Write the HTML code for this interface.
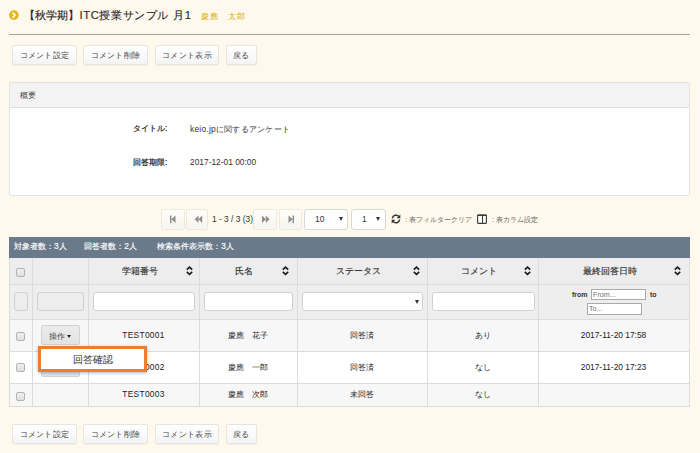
<!DOCTYPE html>
<html><head><meta charset="utf-8">
<style>
*{box-sizing:border-box;margin:0;padding:0}
html,body{width:700px;height:453px;overflow:hidden;background:#fef9ec;font-family:"Liberation Sans",sans-serif;color:#333}
.a{position:absolute;white-space:nowrap}
.title{left:24px;top:7px;font-size:11.2px;line-height:16px;color:#2a2a2a;-webkit-text-stroke:0.15px #2a2a2a}
.name{left:201px;top:9.5px;font-size:8.4px;line-height:12px;letter-spacing:0.9px;color:#e0b010;-webkit-text-stroke:0.05px #e0b010}
.hr{left:9px;top:34px;width:681px;height:1px;background:#a3a3a3}
.btn{position:absolute;height:20px;border:1px solid #e8e5de;border-radius:2px;background:linear-gradient(#fff,#f4f4f4);font-size:8.4px;letter-spacing:0.3px;line-height:18px;text-align:center;color:#444;white-space:nowrap;box-shadow:0 1px 1px rgba(0,0,0,.04)}
.panel{left:9px;top:82px;width:681px;height:114px;border:1px solid #e3e3e3;border-radius:2px;background:#fff;overflow:hidden}
.phead{height:25px;background:#f3f3f4;border-bottom:1px solid #dedede;font-size:8.4px;line-height:24px;padding-left:10px;color:#444}
.lbl{font-size:8.4px;font-weight:normal;color:#222;line-height:10px;-webkit-text-stroke:0.2px #222}
.val{font-size:8.4px;color:#333;line-height:12px}
.kt{letter-spacing:0.25px}
.pbtn{position:absolute;top:209px;height:20.5px;border:1px solid #eee9de;border-radius:2px;background:linear-gradient(#fefdf9,#f7f5ef)}
.pbtn svg{position:absolute;left:0;top:0}
.sel{position:absolute;top:209px;height:20.5px;border:1px solid #d8d8d8;border-radius:3px;background:#fff;font-size:8.4px;line-height:18px;color:#333}
.bar{left:9px;top:237px;width:681px;height:21px;background:#6b7a8b;color:#fff;font-size:8.4px;line-height:19px;-webkit-text-stroke:0.15px #fff}
.row{position:absolute;left:9px;width:681px}
.vl{position:absolute;top:258px;width:1px;height:149px;background:#dcdcdc}
.hl{position:absolute;left:9px;width:681px;height:1px;background:#dcdcdc}
.cb{position:absolute;width:9px;height:9px;border:1px solid #b3b3b3;border-radius:2px;background:linear-gradient(#eee,#e0e0e0)}
.th{position:absolute;top:258px;height:26px;line-height:27px;font-size:8.7px;font-weight:normal;-webkit-text-stroke:0.15px #333;text-align:center;color:#333;white-space:nowrap}
.sort{position:absolute;top:266px}
.fbox{position:absolute;top:292px;height:19px;border:1px solid #d0d0d0;border-radius:3px;background:#fff}
.ftxt{position:absolute;font-size:7px;font-weight:bold;line-height:11px;color:#333}
.dbox{position:absolute;border:1px solid #a9a9a9;background:#fff;font-size:7.2px;line-height:9px;color:#707070;padding-left:1px}
.td{position:absolute;font-size:8.4px;text-align:center;line-height:12px;color:#222;white-space:nowrap}
.opbtn{position:absolute;width:39px;height:20px;border:1px solid #d2d2d2;border-radius:2px;background:linear-gradient(#ececec,#e3e3e3);font-size:8.4px;line-height:18px;text-align:center;color:#444}
.caret{position:absolute;left:25px;top:9px;width:0;height:0;border-left:2.8px solid transparent;border-right:2.8px solid transparent;border-top:3px solid #222}
.popup{left:38px;top:346px;width:109px;height:26px;border:3px solid #ee7e2b;background:#fff;font-size:9.8px;line-height:22px;text-align:center;color:#333;box-shadow:0 1px 3px rgba(0,0,0,.3)}
.tool{font-size:7px;color:#666;line-height:12px}
</style></head><body>
<!-- header -->
<svg class="a" style="left:9px;top:10px" width="10" height="10" viewBox="0 0 10 10"><circle cx="4.9" cy="5.1" r="4.85" fill="#e4b61c"/><path d="M3.6 2.6 L6.0 5.1 L3.6 7.6" fill="none" stroke="#fff8dc" stroke-width="1.9"/></svg>
<div class="a title">【秋学期】<span style="letter-spacing:0.6px;margin-left:0.5px">ITC授業サンプル</span> <span style="letter-spacing:0.6px;margin-left:1px">月1</span></div>
<div class="a name">慶應　太郎</div>
<div class="a hr"></div>

<div class="btn" style="left:12px;top:45px;width:65px">コメント設定</div>
<div class="btn" style="left:83px;top:45px;width:65px">コメント削除</div>
<div class="btn" style="left:155px;top:45px;width:64px">コメント表示</div>
<div class="btn" style="left:226px;top:45px;width:31px">戻る</div>

<!-- panel -->
<div class="a panel">
  <div class="phead">概要</div>
</div>
<div class="a lbl" style="left:133px;top:123px">タイトル:</div>
<div class="a val" style="left:190px;top:123px;letter-spacing:0.25px">keio.jpに関するアンケート</div>
<div class="a lbl" style="left:133px;top:157px">回答期限:</div>
<div class="a val" style="left:190px;top:156px">2017-12-01 00:00</div>

<!-- pagination -->
<div class="pbtn" style="left:161px;width:24px"><svg width="24" height="20" viewBox="0 0 24 20"><path d="M8 5.5h1.4v7.5H8z M9.4 9.25 L13.5 5.5 V13 Z" fill="#8c8c8c"/></svg></div>
<div class="pbtn" style="left:186px;width:22px"><svg width="22" height="20" viewBox="0 0 22 20"><path d="M7.7 9.25 L11.5 5.5 V13 Z M11.5 9.25 L15.2 5.5 V13 Z" fill="#8c8c8c"/></svg></div>
<div class="a val" style="left:212px;top:213px">1 - 3 / 3 (3)</div>
<div class="pbtn" style="left:253px;width:24px"><svg width="24" height="20" viewBox="0 0 24 20"><path d="M8 5.5 L11.8 9.25 L8 13 Z M11.8 5.5 L15.5 9.25 L11.8 13 Z" fill="#8c8c8c"/></svg></div>
<div class="pbtn" style="left:279px;width:23px"><svg width="23" height="20" viewBox="0 0 23 20"><path d="M8.5 5.5 L12.6 9.25 L8.5 13 Z M12.6 5.5h1.4v7.5h-1.4z" fill="#8c8c8c"/></svg></div>
<div class="sel" style="left:304px;width:44px"><span class="a" style="left:10px;top:0">10</span><span class="a" style="left:34px;top:7px;border-left:2.5px solid transparent;border-right:2.5px solid transparent;border-top:4px solid #333"></span></div>
<div class="sel" style="left:351px;width:35px"><span class="a" style="left:10px;top:0">1</span><span class="a" style="left:24px;top:7px;border-left:2.5px solid transparent;border-right:2.5px solid transparent;border-top:4px solid #333"></span></div>
<svg class="a" style="left:391px;top:214px" width="10" height="10" viewBox="0 0 10 10"><path d="M1.3 4.3 A3.8 3.8 0 0 1 8 2.6" fill="none" stroke="#333" stroke-width="1.5"/><path d="M9.3 0.6 V4.2 H5.7 Z" fill="#333"/><path d="M8.7 5.7 A3.8 3.8 0 0 1 2 7.4" fill="none" stroke="#333" stroke-width="1.5"/><path d="M0.7 9.4 V5.8 H4.3 Z" fill="#333"/></svg>
<div class="a tool" style="left:405px;top:214px">: 表フィルタークリア</div>
<svg class="a" style="left:477px;top:214px" width="10" height="10" viewBox="0 0 10 10"><rect x="0.6" y="1.1" width="8.8" height="8.3" rx="1" fill="#fdfdfd" stroke="#3a3a3a" stroke-width="1.1"/><rect x="0.3" y="0.6" width="9.4" height="1.4" fill="#3a3a3a"/><rect x="5" y="1" width="1" height="8" fill="#3a3a3a"/></svg>
<div class="a tool" style="left:492px;top:214px">: 表カラム設定</div>

<!-- table -->
<div class="a bar"><span style="margin-left:5px">対象者数：3人</span><span style="margin-left:17.5px">回答者数：2人</span><span style="margin-left:20.5px">検索条件表示数：3人</span></div>
<div class="row" style="top:258px;height:26px;background:#ededed"></div>
<div class="row" style="top:285px;height:34px;background:#eeeeee"></div>
<div class="row" style="top:320px;height:31px;background:#f7f7f7"></div>
<div class="row" style="top:352px;height:31px;background:#fff"></div>
<div class="row" style="top:384px;height:22px;background:#f7f7f7"></div>
<div class="vl" style="left:9px"></div>
<div class="vl" style="left:32px"></div>
<div class="vl" style="left:88px"></div>
<div class="vl" style="left:199px"></div>
<div class="vl" style="left:297px"></div>
<div class="vl" style="left:427px"></div>
<div class="vl" style="left:538px"></div>
<div class="vl" style="left:689px"></div>
<div class="hl" style="top:284px"></div>
<div class="hl" style="top:319px"></div>
<div class="hl" style="top:351px"></div>
<div class="hl" style="top:383px"></div>
<div class="hl" style="top:406px"></div>

<div class="cb" style="left:16px;top:268px"></div>
<div class="th" style="left:88px;width:103px">学籍番号</div>
<div class="th" style="left:199px;width:90px">氏名</div>
<div class="th" style="left:297px;width:122px">ステータス</div>
<div class="th" style="left:427px;width:104px">コメント</div>
<div class="th" style="left:538px;width:143px">最終回答日時</div>
<svg class="sort" style="left:186px" width="7" height="10" viewBox="0 0 7 10"><path d="M0.8 3.7 L3.5 1.1 L6.2 3.7 M0.8 5.8 L3.5 8.4 L6.2 5.8" fill="none" stroke="#1a1a1a" stroke-width="1.6"/></svg>
<svg class="sort" style="left:282px" width="7" height="10" viewBox="0 0 7 10"><path d="M0.8 3.7 L3.5 1.1 L6.2 3.7 M0.8 5.8 L3.5 8.4 L6.2 5.8" fill="none" stroke="#1a1a1a" stroke-width="1.6"/></svg>
<svg class="sort" style="left:413px" width="7" height="10" viewBox="0 0 7 10"><path d="M0.8 3.7 L3.5 1.1 L6.2 3.7 M0.8 5.8 L3.5 8.4 L6.2 5.8" fill="none" stroke="#1a1a1a" stroke-width="1.6"/></svg>
<svg class="sort" style="left:524px" width="7" height="10" viewBox="0 0 7 10"><path d="M0.8 3.7 L3.5 1.1 L6.2 3.7 M0.8 5.8 L3.5 8.4 L6.2 5.8" fill="none" stroke="#1a1a1a" stroke-width="1.6"/></svg>
<svg class="sort" style="left:674px" width="7" height="10" viewBox="0 0 7 10"><path d="M0.8 3.7 L3.5 1.1 L6.2 3.7 M0.8 5.8 L3.5 8.4 L6.2 5.8" fill="none" stroke="#1a1a1a" stroke-width="1.6"/></svg>

<div class="fbox" style="left:14px;width:14px;background:#ededed"></div>
<div class="fbox" style="left:37px;width:47px;background:#ededed"></div>
<div class="fbox" style="left:93px;width:102px"></div>
<div class="fbox" style="left:204px;width:89px"></div>
<div class="fbox" style="left:302px;width:121px"><span class="a" style="left:112px;top:7px;border-left:2px solid transparent;border-right:2px solid transparent;border-top:4px solid #333"></span></div>
<div class="fbox" style="left:432px;width:103px"></div>
<div class="ftxt" style="left:572px;top:289px">from</div>
<div class="dbox" style="left:591px;top:289px;width:55px;height:11px">From...</div>
<div class="ftxt" style="left:650px;top:289px">to</div>
<div class="dbox" style="left:587px;top:303px;width:55px;height:12px;line-height:10px">To...</div>

<div class="cb" style="left:16px;top:332px"></div>
<div class="opbtn" style="left:41px;top:325px"><span class="a" style="left:6.5px;top:0.5px">操作</span><span class="caret"></span></div>
<div class="td" style="left:88px;width:111px;top:329px;letter-spacing:0.3px">TEST0001</div>
<div class="td" style="left:199px;width:98px;top:329px">慶應　花子</div>
<div class="td" style="left:297px;width:130px;top:329px">回答済</div>
<div class="td" style="left:427px;width:111px;top:329px">あり</div>
<div class="td" style="left:538px;width:151px;top:329px">2017-11-20 17:58</div>

<div class="cb" style="left:16px;top:363px"></div>
<div class="opbtn" style="left:41px;top:357px"><span class="a" style="left:6.5px;top:0.5px">操作</span><span class="caret"></span></div>
<div class="td" style="left:88px;width:111px;top:361px;letter-spacing:0.3px">TEST0002</div>
<div class="td" style="left:199px;width:98px;top:361px">慶應　一郎</div>
<div class="td" style="left:297px;width:130px;top:361px">回答済</div>
<div class="td" style="left:427px;width:111px;top:361px">なし</div>
<div class="td" style="left:538px;width:151px;top:361px">2017-11-20 17:23</div>

<div class="cb" style="left:16px;top:392px"></div>
<div class="td" style="left:88px;width:111px;top:388px;letter-spacing:0.3px">TEST0003</div>
<div class="td" style="left:199px;width:98px;top:388px">慶應　次郎</div>
<div class="td" style="left:297px;width:130px;top:388px">未回答</div>
<div class="td" style="left:427px;width:111px;top:388px">なし</div>

<div class="a popup">回答確認</div>

<div class="btn" style="left:12px;top:424px;width:65px">コメント設定</div>
<div class="btn" style="left:83px;top:424px;width:65px">コメント削除</div>
<div class="btn" style="left:155px;top:424px;width:64px">コメント表示</div>
<div class="btn" style="left:226px;top:424px;width:31px">戻る</div>
</body></html>
